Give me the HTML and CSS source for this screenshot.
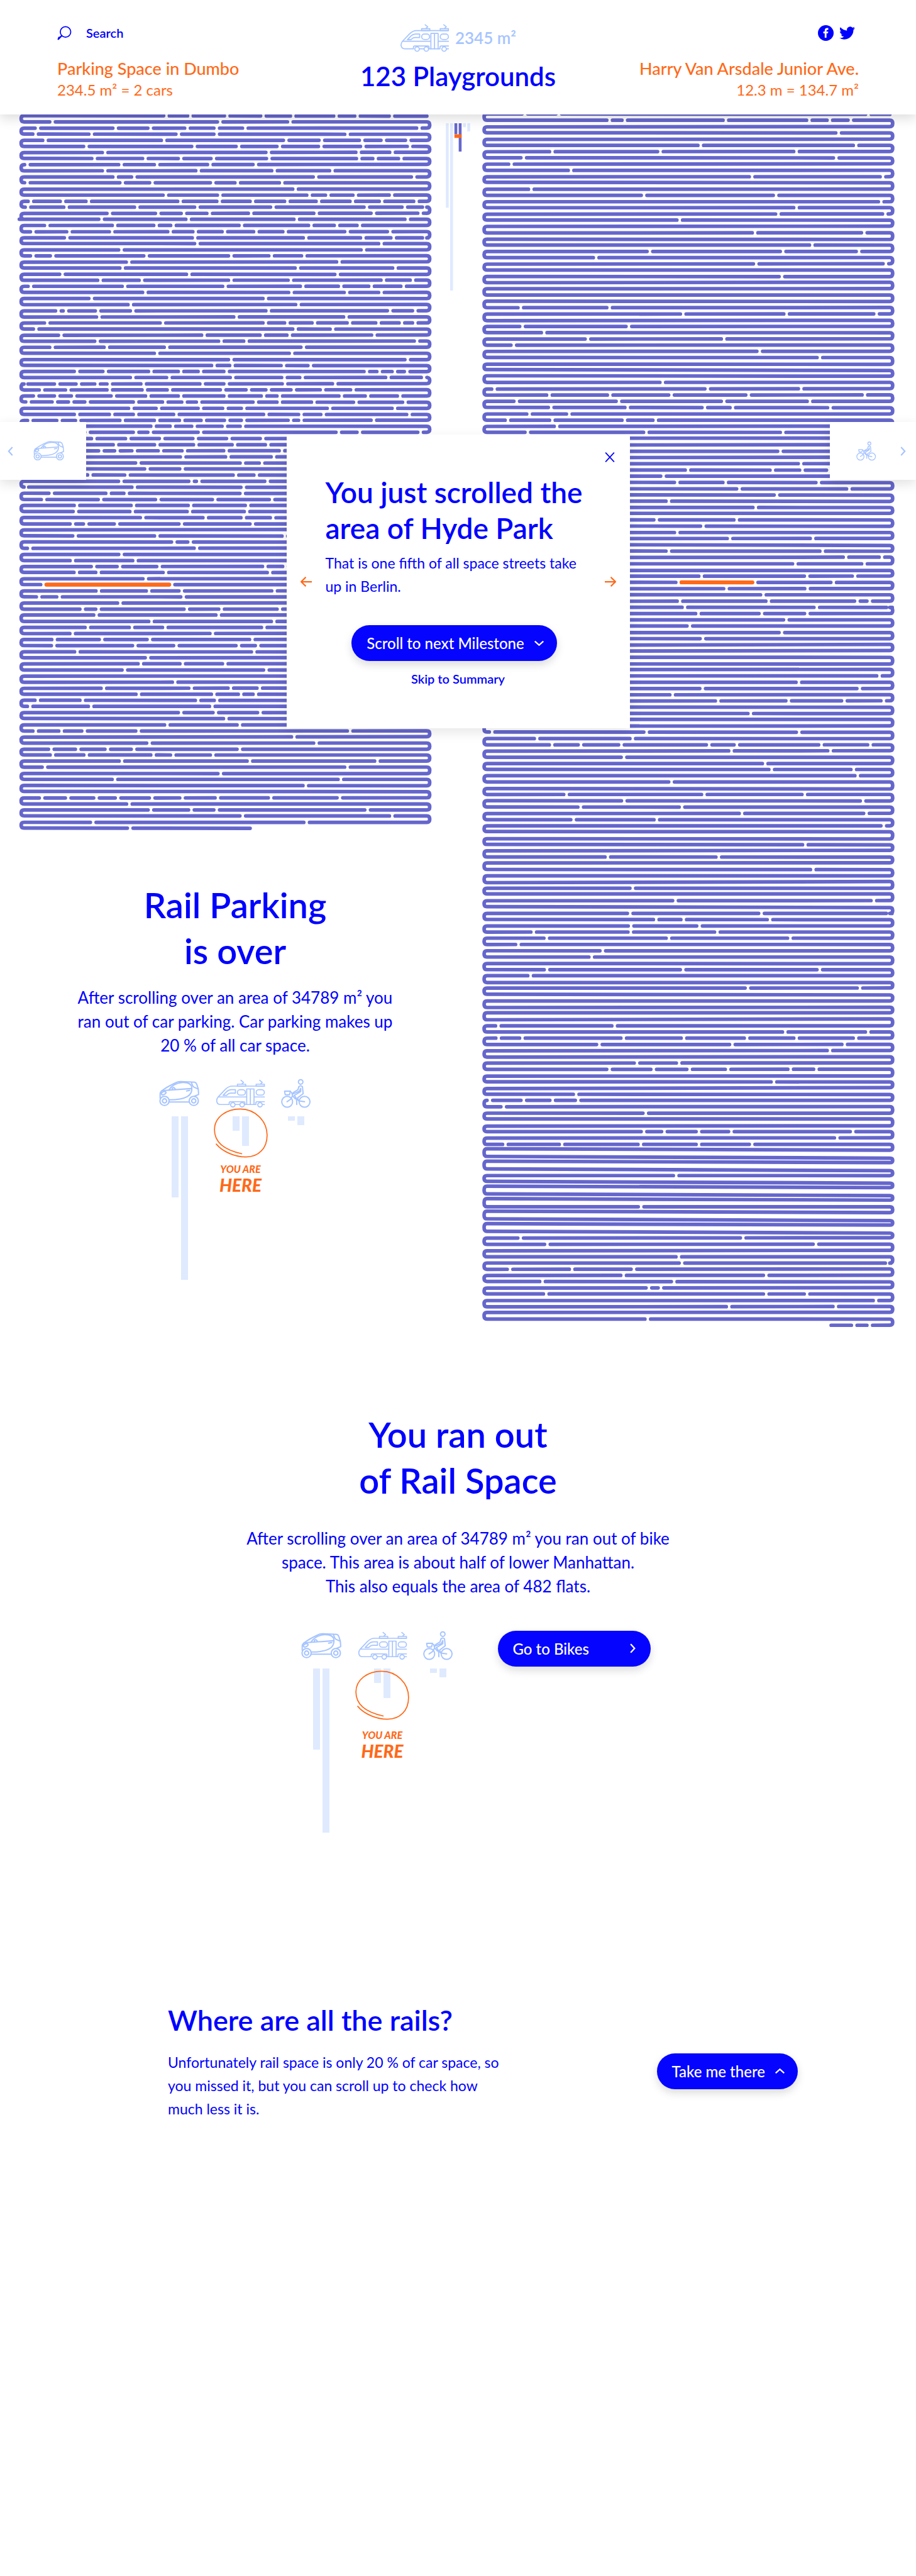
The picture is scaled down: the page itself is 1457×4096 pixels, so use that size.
FILE: index.html
```html
<!DOCTYPE html>
<html lang="en">
<head>
<meta charset="utf-8">
<meta name="viewport" content="width=device-width, initial-scale=1">
<title>Rail Space</title>
<link rel="stylesheet" href="styles.css">
</head>
<body>
<svg class="sprite" aria-hidden="true">
  <symbol id="car" viewBox="0 0 116 75">
    <g fill="none" stroke="currentColor" stroke-width="3.6" stroke-linecap="round" stroke-linejoin="round">
      <circle cx="15.5" cy="58" r="13"/><circle cx="15.5" cy="58" r="6"/>
      <circle cx="98.500" cy="58" r="13"/><circle cx="98.500" cy="58" r="6"/>
      <path d="M3 50V38Q3 34 7 30C20 20 35 12 51 5Q56 3 62 3L101 5Q105 6 107 11Q113 24 112 40L100 45"/>
      <path d="M7 30Q12 28 18 28L92 23"/>
      <path d="M28 27C38 12 52 7 66 6C84 5 92 11 93 21C95 42 78 55 29 55"/>
      <path d="M92 5Q94 16 99 19L110 24M28 61H86M78 30L87 28M38 26Q36 20 42 20L46 24"/>
      <ellipse cx="13" cy="36" rx="7" ry="4" transform="rotate(-25 13 36)"/>
    </g>
  </symbol>
  <symbol id="train" viewBox="110 78 422 242">
    <g fill="none" stroke="currentColor" stroke-width="9" stroke-linecap="round" stroke-linejoin="round">
      <path d="M524 135H250C220 135 205 150 190 165L132 226C108 255 120 291 150 291H225V277Q225 267 235 267H350Q358 267 358 277V291H452V277Q452 267 462 267H524"/>
      <path d="M135 227H370M438 227H524M374 291V159H436V291M405 159V291M277 291H314M508 291H524"/>
      <path d="M278 165H240Q218 167 203 182L173 213H205Q218 194 240 194H278Z"/>
      <rect x="295" y="165" width="68" height="46" rx="23"/><rect x="454" y="165" width="70" height="46" rx="23"/>
      <path d="M295 119H365V135H295ZM454 119H524V135H454ZM325 85L347 103L333 115M484 85L506 103L492 115"/>
      <g fill="#fff"><circle cx="256" cy="293" r="19"/><circle cx="335" cy="293" r="19"/><circle cx="487" cy="293" r="19"/></g>
    </g>
  </symbol>
  <symbol id="bike" viewBox="0 0 86 84">
    <g fill="none" stroke="currentColor" stroke-width="3.500" stroke-linecap="round" stroke-linejoin="round">
      <circle cx="17.500" cy="65" r="15.500"/><circle cx="67" cy="65" r="15.500"/>
      <circle cx="56" cy="8.500" r="6.500"/>
      <path d="M51 22Q56 17 61 22L63 42L47 54L50 62"/>
      <path d="M51 22L48 31L36 38L33 43L52 35L56 27V36L38 47"/>
      <path d="M38 47L44 56L45 73M10 35H27L24 45H12ZM30 38L33 48L27 58L17 65M33 48L40 56L54 63L67 65"/>
    </g>
  </symbol>
  <symbol id="ring" viewBox="0 0 151 138">
    <path d="M78 127C45 120 2 103 2 60C2 25 35 2 74 2C115 2 149 35 149 75C149 112 125 136 90 136C60 136 25 122 7 100" fill="none" stroke="currentColor" stroke-width="3" stroke-linecap="round"/>
  </symbol>
  <symbol id="chevron" viewBox="0 0 16 28">
    <path d="M2 2L13 14L2 26" fill="none" stroke="currentColor" stroke-width="4"/>
  </symbol>
  <symbol id="arrow" viewBox="0 0 32 32">
    <path d="M0 16H29M17 3L30 16L17 29" fill="none" stroke="currentColor" stroke-width="4"/>
  </symbol>
</svg>

<header class="header">
  <div class="header-side">
    <div class="search">
      <label for="search" aria-label="Search"><svg class="search-icon" viewBox="0 0 40 40"><path d="M1 39L3 31L11 29" fill="currentColor"/><circle cx="23" cy="17" r="14.500" fill="none" stroke="currentColor" stroke-width="3"/><path d="M2 38L13 27" stroke="currentColor" stroke-width="4"/></svg></label>
      <input class="search-input" id="search" type="text" placeholder="Search">
    </div>
    <div class="place"><strong>Parking Space in Dumbo</strong><span>234.5 m² = 2 cars</span></div>
  </div>
  <div class="header-center">
    <div class="total"><svg class="total-icon"><use href="#train"/></svg><span>2345 m²</span></div>
    <h1 class="count">123 Playgrounds</h1>
  </div>
  <div class="header-side header-side-end">
    <div class="social">
      <a href="#facebook" aria-label="Facebook"><svg viewBox="0 0 44 44"><circle cx="22" cy="22" r="22" fill="currentColor"/><path d="M19 35V23H15V18H19V15Q19 8 26 8H29V13H27Q24 13 24 16V18H29L28 23H24V35Z" fill="#fff"/></svg></a>
      <a href="#twitter" aria-label="Twitter"><svg viewBox="0 0 24 24"><path fill="currentColor" d="M23.953 4.570a10 10 0 01-2.825.775 4.958 4.958 0 002.163-2.723c-.951.555-2.005.959-3.127 1.184a4.920 4.920 0 00-8.384 4.482C7.690 8.095 4.067 6.130 1.640 3.162a4.822 4.822 0 00-.666 2.475c0 1.710.870 3.213 2.188 4.096a4.904 4.904 0 01-2.228-.616v.060a4.923 4.923 0 003.946 4.827 4.996 4.996 0 01-2.212.085 4.936 4.936 0 004.604 3.417 9.867 9.867 0 01-6.102 2.105c-.390 0-.779-.023-1.170-.067a13.995 13.995 0 007.557 2.209c9.053 0 13.998-7.496 13.998-13.985 0-.210 0-.420-.015-.630A9.935 9.935 0 0024 4.590z"/></svg></a>
    </div>
    <div class="place"><strong>Harry Van Arsdale Junior Ave.</strong><span>12.3 m = 134.7 m²</span></div>
  </div>
</header>

<main>
  <div class="space">
    <div class="space-col">
      <svg class="coil" id="coil-parking" viewBox="0 320 1280 2000"></svg>
      <section class="over">
        <h2 class="title-xl">Rail Parking<br>is over</h2>
        <p class="text-lg over-text">After scrolling over an area of 34789 m² you<br>ran out of car parking. Car parking makes up<br>20 % of all car space.</p>
        <div class="chart">
          <div class="chart-item chart-car"><svg class="chart-icon"><use href="#car"/></svg><div class="bars"><i style="height:129px"></i><i style="height:260px"></i></div></div>
          <div class="chart-item chart-train"><svg class="chart-icon"><use href="#train"/></svg><div class="bars"><i style="height:23px"></i><i style="height:47px"></i></div>
            <div class="here"><svg class="here-ring"><use href="#ring"/></svg><span>YOU ARE</span><b>HERE</b></div></div>
          <div class="chart-item chart-bike"><svg class="chart-icon"><use href="#bike"/></svg><div class="bars"><i style="height:7px"></i><i style="height:14px"></i></div></div>
        </div>
      </section>
    </div>
    <div class="space-col">
      <svg class="coil" id="coil-rails" viewBox="1280 320 1280 3392"></svg>
    </div>

    <svg class="minimap" viewBox="0 0 68 468" aria-label="Overview">
      <g fill="#dfeaff"><path d="M0 0H8V236H0ZM12 0H20V468H12ZM48 0H56V11H48ZM60 0H68V23H60Z"/></g>
      <path fill="#6566cc" d="M24 0H32V31H24ZM36 0H44V79H36Z"/><path fill="#ff6919" d="M24 31H44V41H24Z"/>
    </svg>

    <button class="tab tab-left" aria-label="Cars"><svg class="tab-chevron flip"><use href="#chevron"/></svg><svg class="tab-car"><use href="#car"/></svg></button>
    <button class="tab tab-right" aria-label="Bikes"><svg class="tab-bike"><use href="#bike"/></svg><svg class="tab-chevron"><use href="#chevron"/></svg></button>

    <div class="modal" role="dialog" aria-labelledby="milestone">
      <button class="icon-button close" aria-label="Close"><svg viewBox="0 0 28 28"><path d="M2 1L26 27M26 1L2 27" stroke="currentColor" stroke-width="3"/></svg></button>
      <button class="icon-button prev" aria-label="Previous"><svg class="flip"><use href="#arrow"/></svg></button>
      <button class="icon-button next" aria-label="Next"><svg><use href="#arrow"/></svg></button>
      <h2 class="title-lg" id="milestone">You just scrolled the<br>area of Hyde Park</h2>
      <p class="text-md modal-text">That is one fifth of all space streets take<br>up in Berlin.</p>
      <div class="modal-actions">
        <button class="button">Scroll to next Milestone<svg class="down"><use href="#chevron"/></svg></button>
        <a class="skip" href="#summary">Skip to Summary</a>
      </div>
    </div>
  </div>

  <section class="summary" id="summary">
    <h2 class="title-xl">You ran out<br>of Rail Space</h2>
    <p class="text-lg summary-text">After scrolling over an area of 34789 m² you ran out of bike<br>space. This area is about half of lower Manhattan.<br>This also equals the area of 482 flats.</p>
    <div class="summary-row">
      <div class="chart">
        <div class="chart-item chart-car"><svg class="chart-icon"><use href="#car"/></svg><div class="bars"><i style="height:129px"></i><i style="height:261px"></i></div></div>
        <div class="chart-item chart-train"><svg class="chart-icon"><use href="#train"/></svg><div class="bars"><i style="height:23px"></i><i style="height:47px"></i></div>
          <div class="here here-low"><svg class="here-ring"><use href="#ring"/></svg><span>YOU ARE</span><b>HERE</b></div></div>
        <div class="chart-item chart-bike"><svg class="chart-icon"><use href="#bike"/></svg><div class="bars"><i style="height:7px"></i><i style="height:14px"></i></div></div>
      </div>
      <button class="button button-wide">Go to Bikes<svg><use href="#chevron"/></svg></button>
    </div>
  </section>

  <section class="where">
    <h2 class="title-lg where-title">Where are all the rails?</h2>
    <div class="where-row">
      <p class="text-md">Unfortunately rail space is only 20 % of car space, so<br>you missed it, but you can scroll up to check how<br>much less it is.</p>
      <button class="button where-button">Take me there<svg class="up"><use href="#chevron"/></svg></button>
    </div>
  </section>
</main>
<script src="coils.js"></script>
</body>
</html>
```
FILE: coils.js
```js
// Each coil is one long strip folded into rows. A sheet lists, row by row,
// where the strip is cut; x = origin + value / scale.
const parking = [
  { origin: 0, scale: 0.6125, rows: `285 326 389 451 502 576 612 671
90 377 497
65 198 258 321 371 420 718
61 157 306 371 595
78 281 490 551 620 657 699
148 333 409 479 550 622 702
180 460 614 672
162 249 310 366 461 615 643 687
47 208 269 360 438
180 340 470 569
198 230 541 709
47 210 261 365 407 483
506
284 377 530 562 609 671
53 108 152 309 376 433 492 546 604 654 713
48 114 235 338 468 628 693 728
188 271 315 359 430 542 640 720
38 174 323 508 698
81 197 268 297 414 533 577 616
57 119 192 292 335 385 439 489 595 668
115 334 524 622 674 728
338 653
208 623
57 91 251 396 465 521
221 581
210 510 677
107 324 578
172 243 396 498 657 707
53 214 386 519 584 636 691
249 499 594 653
157 455
224 511
100 113 168 228 460 668 711
170 405 593
81 279 455 492 539 599 648 688 711
62 506 570
105 350 450 496 641
167 379 422 714
90 183 286 520
269 500
396 698
367 398 486 532
132 181 259 310 344 388 628 650 676 697
228 290 399 487 518 665 726
43 98 135 167 188 246 347 388 488 574
72 117 188 248 291 382 426 460 503 553 605
62 98 127 195 254 310 388 452 479 585 630 685
49 94 122 150 233 283 316 341 438 479 538 610 694
225 272 344 386 418 565 676
132 192 233 302 456 516 554 701
52 102 134 210 269 312 349 389 418 498 516 640
263 296 333 385 416
150 233 258 344 580 616 720` },
  { origin: 0, scale: 1.7422, rows: `459 625 790 953 1117 1281
565 766 956 1144 1306
494 572 656 784 900 1103 1373
892 1112 1334
674 1183 1276
718 889
440 621 1149 1250
591 933 970 1303
126 656 1187
252 529 617 1182
215 492 771 1048 1325
375 652 930 1208
370 646 925 1203
697 1002 1187 1330
355 420 570 885 1231

368 766 1387
849 928
147 959
592
355 660
458 584 777 1292 1390
374 480 808 1315
710
212 838
481 726 885 1337
191 290 894
586
403 480 910 1079 1363
470 1065
738 1335
428 643 805 1287
354 1036
266 497 730 1229
264 659 859 1163 1257
377 1238
721
686 890 1097
608 1297

853
506 933 1124 1265
676 1043 1174 1246
184 403 965 1057
147 444 1034
882 1051 1268
1102
815 1168
174 300 412 675 1705
1433
728 1541
250 381 525 653 1168
258 422 748 844 1038
594 1217 1838
219 1692
1075
560 1660
1489

205 332 470 575 741 889 1061 1320 1655
630
735 932 1055 1790
1182 1910
454 1493
634` },
];

const rails = [
  { origin: 0, scale: 0.6125, rows: `898 956 1486
1043 1069 1242 1385 1420 1456

1435

1199 1465
945 1130 1363
896 1431
875
977
1287 1511

909
1102 1328
1508
1363
1332 1515
1163

1292 1479

1390
1112 1340 1470
1020
1294 1516

1338




891 1043
1169 1346 1500

894 1076
931
1006 1239
879
1300
1403



1134
846 1211 1371
940 1044 1149 1281 1480
884 1059 1239 1386
943 1074 1206 1254 1421
906 974
869 945 1069 1122
953
903 1106 1340` },
  { origin: 1700, scale: 1.8233, rows: `

876

981
405 837 988 1125
280
350 597 1071
667 1227
858
307
750

245 653
483
350
619 1042

307 1091
1210 1393
952 1304

474 1012 1256
357 747 1147
601 1014
789
364 816 1268 1331
389 1061 1431
458 781 1013
906
414
883
481` },
  { origin: 1320, scale: 1.2645, rows: `




1438
1153
813 1368
707
868 1117 1314 1453

983


69 615 1154
228 566
281 383 526 836 934 1233 1406
915 1265
535
1034
1057 1347
1361
703

332 819 1174
536 1380
382 740
952 1392
357 651
1453


1176

478 870

1204


566

717 1418

557 1021 1472
649 746 1051
560 802
216 559 865
262 694 1123
162
460
421

263 744 1227
205

973 1369





91 502
1105 1398
92 176 534 747 970 1145 1355
448 918 1315
1263

581 730
484 640 767 903 1124 1215

1065

366
61 181 283 373
110
612` },
  { origin: 1300, scale: 1.2444, rows: `

621 692 812 925 1348
1293
139 336 610 812 997




733




611




192 966
285 1219

742
753 1470
155 371 586
550 1046
268 726
638 680
281 1046 1188
1428
917 1288

634
1352 1406` },
];

function unfold(sheets) {
  return sheets.flatMap(({ origin, scale, rows }) =>
    rows.split('\n').map(line =>
      line.trim() ? line.trim().split(' ').map(n => origin + n / scale) : []));
}

function drawCoil(id, sheets, o) {
  const cuts = unfold(sheets);
  let seed = 7;
  const wobble = size => {
    seed = (seed * 16807) % 2147483647;
    return (seed / 2147483647 - 0.5) * 2 * size;
  };
  const half = 8, bend = 8;
  const ends = cuts.map((row, i) => {
    const y = o.top + i * o.step;
    const size = row.length ? 0.7 : 1.8;
    let l = y + wobble(size), r = y + wobble(size);
    // uncut rows in this range sag to one side
    if (o.lean && i >= o.lean[0] && i <= o.lean[1] && !row.length) {
      l = y + (i % 2 ? -1 : -5);
      r = y + (i % 2 ? 4 : -1);
    }
    return { l, r };
  });
  const yAt = (i, x) => {
    const t = (x - o.left) / (o.right - o.left);
    return (ends[i].l + (ends[i].r - ends[i].l) * t).toFixed(1);
  };
  const last = cuts.length - 1;
  let strip = `M${o.right} ${ends[0].r}`;
  cuts.forEach((row, i) => {
    const leftward = i % 2 === 0;
    const dir = leftward ? -1 : 1;
    (leftward ? [...row].reverse() : row).forEach(x => {
      const a = x - dir * half, b = x + dir * half;
      strip += `L${a.toFixed(1)} ${yAt(i, a)}M${b.toFixed(1)} ${yAt(i, b)}`;
    });
    if (i === last) {
      strip += `L${o.end} ${yAt(i, o.end)}`;
      return;
    }
    const side = leftward ? 'l' : 'r';
    const x = leftward ? o.left : o.right;
    const y0 = ends[i][side], y1 = ends[i + 1][side];
    const out = x + (leftward ? -bend : bend);
    strip += `L${x} ${y0}Q${out} ${y0} ${out} ${(y0 + y1) / 2}Q${out} ${y1} ${x} ${y1}`;
  });
  const from = cuts[o.mark][0] + half, to = cuts[o.mark][1] - half;
  const mark = `M${from} ${yAt(o.mark, from)}L${to} ${yAt(o.mark, to)}`;
  document.getElementById(id).innerHTML =
    `<path class="strip" d="${strip}"/><path class="strip strip-mark" d="${mark}"/>`;
}

drawCoil('coil-parking', parking,
  { top: 324, step: 17.01, left: 67, right: 1193, end: 699, mark: 77 });
drawCoil('coil-rails', rails,
  { top: 319, step: 17.443, left: 1360, right: 2486, end: 2322, mark: 75, lean: [166, 179] });
```
FILE: styles.css
```css
* {
  box-sizing: border-box;
}

body {
  margin: 0;
  background: #fff;
  color: #0000ff;
  font-family: Lato, "Open Sans", sans-serif;
}

h1, h2, p {
  margin: 0;
}

button, input {
  font: inherit;
  color: inherit;
}

button {
  border: 0;
  padding: 0;
  cursor: pointer;
}

svg {
  display: block;
}

.sprite {
  position: absolute;
  width: 0;
  height: 0;
}

.flip {
  transform: scaleX(-1);
}

/* Header */

.header {
  position: relative;
  z-index: 2;
  display: grid;
  grid-template-columns: 1fr auto 1fr;
  height: 182px;
  padding: 0 91px;
  background: #fff;
  box-shadow: 0 6px 18px rgba(0, 0, 0, 0.14);
}

.header-side {
  display: flex;
  flex-direction: column;
  gap: 26px;
  padding-top: 38px;
}

.header-side-end {
  align-items: flex-end;
  text-align: right;
}

.search {
  display: flex;
  align-items: center;
  gap: 23px;
  height: 28px;
}

.search-icon {
  width: 23px;
  height: 23px;
}

.search-input {
  width: 160px;
  padding: 0;
  border: 0;
  outline: 0;
  background: none;
  font-size: 20px;
  font-weight: 600;
}

.search-input::placeholder {
  color: #0000ff;
  opacity: 1;
}

.place {
  display: flex;
  flex-direction: column;
  color: #ff6919;
  line-height: 34px;
  white-space: nowrap;
}

.place strong {
  font-size: 27px;
  font-weight: 500;
}

.place span {
  font-size: 24px;
  font-weight: 400;
}

.header-center {
  display: flex;
  flex-direction: column;
  align-items: center;
  padding-top: 38px;
}

.total {
  display: flex;
  align-items: center;
  gap: 9px;
  color: #a6c4ff;
  font-size: 26px;
  font-weight: 600;
  line-height: 45px;
}

.total-icon {
  width: 79px;
  height: 45px;
}

.count {
  margin-top: 13px;
  font-size: 42px;
  font-weight: 600;
  line-height: 50px;
}

.social {
  display: flex;
  align-items: center;
  gap: 9px;
  height: 28px;
  padding-right: 6px;
}

.social a {
  color: #0000ff;
}

.social svg {
  width: 25px;
  height: 25px;
}

/* Space coils */

.space {
  position: relative;
  display: grid;
  grid-template-columns: 1fr 1fr;
}

.coil {
  width: 100%;
}

.strip {
  fill: none;
  stroke: #6566cc;
  stroke-width: 10;
  stroke-linecap: round;
  stroke-linejoin: round;
}

.strip-mark {
  stroke: #ff6919;
  stroke-width: 11;
}

.minimap {
  position: absolute;
  top: 14px;
  left: 50%;
  width: 39px;
  height: 266px;
  margin-left: -20px;
}

.tab {
  position: absolute;
  top: 489px;
  display: flex;
  align-items: center;
  width: 137px;
  height: 92px;
  background: #fff;
  color: #a6c4ff;
  box-shadow: 0 6px 18px rgba(0, 0, 0, 0.12);
}

.tab-left {
  left: 0;
  gap: 32px;
  padding-left: 12px;
}

.tab-right {
  right: 0;
  justify-content: flex-end;
  gap: 38px;
  padding-right: 16px;
}

.tab-chevron {
  width: 9px;
  height: 15px;
}

.tab-car {
  width: 50px;
  height: 32px;
}

.tab-bike {
  width: 32px;
  height: 31px;
}

/* Milestone dialog */

.modal {
  position: absolute;
  top: 509px;
  left: 50%;
  width: 546px;
  height: 467px;
  padding: 63px 62px 0;
  background: #fff;
  box-shadow: 0 6px 18px rgba(0, 0, 0, 0.1);
  transform: translateX(-50%);
}

.modal-text {
  margin-top: 9px;
}

.icon-button {
  position: absolute;
  width: 18px;
  height: 18px;
  background: none;
}

.icon-button svg {
  width: 100%;
  height: 100%;
}

.close {
  top: 28px;
  right: 24px;
  width: 16px;
  height: 16px;
}

.prev {
  top: 225px;
  left: 22px;
  color: #ff6919;
}

.next {
  top: 225px;
  right: 22px;
  color: #ff6919;
}

.modal-actions {
  display: flex;
  flex-direction: column;
  align-items: center;
  gap: 16px;
  margin-top: 43px;
  padding-right: 12px;
}

.skip {
  padding-left: 12px;
  color: #0000ff;
  font-size: 20px;
  font-weight: 600;
  line-height: 24px;
  text-decoration: none;
}

/* Type */

.title-xl {
  font-size: 56px;
  font-weight: 600;
  line-height: 73px;
}

.title-lg {
  font-size: 46px;
  font-weight: 600;
  line-height: 57px;
}

.text-lg {
  font-size: 26px;
  font-weight: 400;
  line-height: 38px;
  white-space: nowrap;
}

.text-md {
  font-size: 23px;
  font-weight: 400;
  line-height: 37px;
  white-space: nowrap;
}

/* Buttons */

.button {
  display: flex;
  align-items: center;
  justify-content: space-between;
  gap: 19px;
  height: 57px;
  padding: 0 24px;
  border-radius: 29px;
  background: #0505ff;
  color: #fff;
  font-size: 24px;
  font-weight: 500;
  white-space: nowrap;
  box-shadow: 0 6px 14px rgba(0, 0, 0, 0.14);
}

.button svg {
  width: 9px;
  height: 16px;
}

.button-wide {
  width: 243px;
}

.down {
  transform: rotate(90deg);
}

.up {
  transform: rotate(-90deg);
}

/* Charts */

.chart {
  display: flex;
  justify-content: center;
  align-items: flex-start;
  gap: 25px;
  color: #a6c4ff;
}

.chart-item {
  position: relative;
  display: flex;
  flex-direction: column;
  align-items: center;
  gap: 12px;
}

.chart-icon {
  width: 100%;
  height: 48px;
}

.chart-car {
  width: 65px;
}

.chart-train {
  width: 79px;
}

.chart-bike {
  width: 48px;
}

.bars {
  display: flex;
  gap: 4px;
}

.bars i {
  width: 11px;
  background: #dfeaff;
}

.here {
  position: absolute;
  top: 47px;
  left: 50%;
  display: flex;
  flex-direction: column;
  align-items: center;
  color: #ff6919;
  font-style: italic;
  font-weight: 900;
  white-space: nowrap;
  transform: translateX(-50%);
}

.here-low {
  top: 63px;
}

.here-low .here-ring {
  margin-bottom: 14px;
}

.here-ring {
  width: 86px;
  height: 79px;
  margin-bottom: 8px;
}

.here span {
  font-size: 16px;
  line-height: 20px;
}

.here b {
  font-size: 28px;
  font-weight: 900;
  line-height: 30px;
}

/* Sections */

.over {
  width: 512px;
  margin: 82px 0 0 118px;
  text-align: center;
}

.over-text {
  display: flex;
  justify-content: center;
  margin: 19px 0 34px;
}

.summary {
  padding-top: 131px;
  text-align: center;
}

.summary-text {
  margin: 37px 0 52px;
}

.summary-row {
  display: flex;
  justify-content: center;
  align-items: flex-start;
  gap: 71px;
  padding-left: 56px;
}

.where {
  padding: 270px 188px 700px 267px;
}

.where-title {
  font-size: 45px;
}

.where-row {
  display: flex;
  justify-content: space-between;
  align-items: flex-start;
  margin-top: 20px;
}

.where-button {
  margin-top: 4px;
}
```
